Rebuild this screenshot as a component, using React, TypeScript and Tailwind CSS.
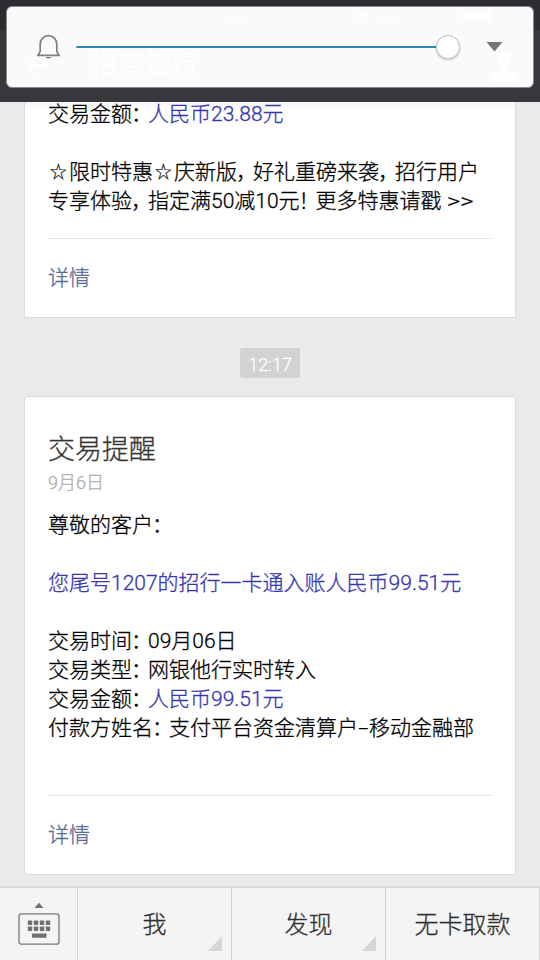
import type { ReactNode } from "react";

const MENU: { label: string; width: string; hasSubmenu: boolean }[] = [
  { label: "我", width: "w-[154px]", hasSubmenu: true },
  { label: "发现", width: "w-[154px]", hasSubmenu: true },
  { label: "无卡取款", width: "w-[154px]", hasSubmenu: false },
];

// Full-width punctuation is set tighter than the surrounding characters
function Text({ children }: { children: string }) {
  return (
    <>
      {children.split(/(>>|[：，！☆-])/).map((part, i) => {
        if (part === "-") {
          return (
            <span key={i} className="inline-block w-[11px] scale-x-[1.7] text-center">-</span>
          );
        }
        if (part === ">>") {
          return (
            <span key={i} className="inline-block origin-left scale-x-[1.22]">{part}</span>
          );
        }
        if (part === "☆") {
          return (
            <span key={i} className="inline-block scale-[0.8]">☆</span>
          );
        }
        if (/[：，！]/.test(part)) {
          return (
            <span key={i} className="relative -left-px tracking-[-5px]">{part}</span>
          );
        }
        return part;
      })}
    </>
  );
}

function Line({ children }: { children?: ReactNode }) {
  return <p className="h-[29px] whitespace-pre">{children}</p>;
}

function Amount({ children }: { children: string }) {
  return <span className="text-[#3636b0]">{children}</span>;
}

export default function App() {
  return (
    <div className="relative flex h-[960px] w-[540px] flex-col overflow-hidden bg-[#eaeaea] font-[Roboto,'Noto_Sans_CJK_SC',sans-serif] text-[21px] font-light leading-[29px] text-black [-webkit-text-stroke:0.3px]">
      <Header />
      <main className="flex flex-1 flex-col items-center overflow-hidden">
        <section className="h-[216px] w-[492px] shrink-0 border-x border-b border-[#dcdcdc] bg-white bg-linear-to-b from-[#f6f6f6] to-white to-[8px] px-[23px]">
          <div className="h-[136px]">
            <p className="h-[27px] leading-[24px]"><Text>交易金额：</Text><Amount>人民币23.88元</Amount></p>
            <Line />
            <Line><Text>☆限时特惠☆庆新版，好礼重磅来袭，招行用户</Text></Line>
            <Line><Text>{"专享体验，指定满50减10元！更多特惠请戳 >>"}</Text></Line>
          </div>
          <Details />
        </section>

        <div className="mt-[30px] flex h-[30px] w-[60px] shrink-0 items-center justify-center rounded-[3px] bg-[#d2d2d2] pt-[2px] text-[18px] text-white">
          12:17
        </div>

        <section className="mt-[18px] h-[479px] w-[492px] shrink-0 rounded-[3px] border border-[#dadada] bg-white px-[23px]">
          <div className="h-[398px] pt-[36px]">
            <h1 className="h-[36px] text-[27px] leading-[34px] text-[#353535]">交易提醒</h1>
            <p className="h-[28px] text-[18px] leading-[28px] text-[#b0b0b0]">9月6日</p>
            <div className="mt-[14px]">
              <Line><Text>尊敬的客户：</Text></Line>
              <Line />
              <Line><Amount>您尾号1207的招行一卡通入账人民币99.51元</Amount></Line>
              <Line />
              <Line><Text>交易时间：09月06日</Text></Line>
              <Line><Text>交易类型：网银他行实时转入</Text></Line>
              <Line><Text>交易金额：</Text><Amount>人民币99.51元</Amount></Line>
              <Line><Text>付款方姓名：支付平台资金清算户-移动金融部</Text></Line>
            </div>
          </div>
          <Details />
        </section>
      </main>
      <MenuBar />
      <VolumePanel />
    </div>
  );
}

function Details() {
  return (
    <div className="flex h-[79px] items-center border-t border-[#e3e3e3] text-[#576b95]">
      详情
    </div>
  );
}

function Header() {
  return (
    <header className="flex h-[102px] shrink-0 flex-col bg-[#37383c]">
      <div className="h-[30px] bg-[#2d2d32]" />
    </header>
  );
}

function VolumePanel() {
  return (
    <div className="absolute left-[6px] top-[6px] h-[82px] w-[528px] rounded-[6px] border border-[#8a8a8c] bg-[#fafafa]">
      {/* status and title bars showing faintly through the panel */}
      <svg className="absolute left-0 top-0" width="526" height="30" viewBox="0 0 526 30" fill="#fdfdfd">
        <circle cx="224" cy="12" r="1.5" />
        <circle cx="231" cy="12" r="1.5" />
        <circle cx="238" cy="12" r="1.5" />
        <path d="M346 6q8-6 16 0l-8 9z" />
        <circle cx="376" cy="13" r="1.5" />
        <circle cx="383" cy="13" r="1.5" />
        <circle cx="390" cy="13" r="1.5" />
        <rect x="455" y="3" width="30" height="11" rx="2" />
      </svg>
      <div className="absolute left-[18px] top-[44px] flex items-center text-[#fefefe]">
        <svg width="24" height="28" viewBox="0 0 24 28" fill="none" stroke="currentColor" strokeWidth="3">
          <path d="M22 14H4M12 4L3 14l9 10" />
        </svg>
        <span className="ml-[42px] text-[27px] font-normal">招商银行</span>
      </div>
      <svg className="absolute left-[481px] top-[43px] text-[#fefefe]" width="32" height="32" viewBox="0 0 32 32" fill="currentColor">
        <path d="M16 2c-4 0-6 3-6 7s1 6 3 8v3c-4 2-10 3-12 6v5h30v-5c-2-3-8-4-12-6v-3c2-2 3-4 3-8s-2-7-6-7z" />
      </svg>

      <div className="relative flex h-full items-center">
        <svg className="ml-[30px]" width="23" height="26" viewBox="0 0 23 26" fill="none" stroke="#808080" strokeWidth="1.7">
          <path d="M3.2 17.5V10.2a8.3 8.6 0 0 1 16.6 0v7.3L22 21.3H1z" />
          <path d="M8.3 23h6.4c-.8 1.9-5.6 1.9-6.4 0z" fill="#808080" stroke="none" />
        </svg>
        <div className="ml-[16px] h-[2px] w-[361px] rounded-full bg-[#2e8aaa]" />
        <div className="-ml-[1px] size-[24px] rounded-full border border-[#c4c4c8] bg-white shadow-[0_1px_2px_rgba(0,0,0,0.25)]" />
        <svg className="ml-[26px]" width="17" height="10" viewBox="0 0 17 10" fill="#767676">
          <path d="M.5 0h16L8.5 9.5z" />
        </svg>
      </div>
    </div>
  );
}

function MenuBar() {
  return (
    <nav className="flex h-[74px] shrink-0 border-t-2 border-[#dcdcdc] bg-[#f4f4f4] text-[24px] text-[#303030]">
      <div className="flex w-[77px] justify-center pt-[14px]">
        <svg width="42" height="44" viewBox="0 0 42 44" fill="#707070">
          <path d="M16.5 6h9L21 .8z" />
          <rect x="1" y="11.8" width="40" height="30.4" rx="2.5" fill="none" stroke="#77777a" strokeWidth="1.3" />
          {[9.8, 15.8, 21.8, 27.8].map((x) => (
            <g key={x}>
              <rect x={x} y="18.5" width="4.4" height="4.4" rx=".7" />
              <rect x={x} y="24.5" width="4.4" height="4.4" rx=".7" />
            </g>
          ))}
          <rect x="14" y="31.5" width="14.5" height="4.2" rx=".7" />
        </svg>
      </div>
      {MENU.map((item) => (
        <div
          key={item.label}
          className={`relative flex items-center justify-center border-l border-[#d2d2d2] pt-[3px] ${item.width}`}
        >
          {item.label}
          {item.hasSubmenu && (
            <svg className="absolute bottom-[9px] right-[9px]" width="14" height="15" viewBox="0 0 14 15" fill="#d6d6d6">
              <path d="M14 0v15H0z" />
            </svg>
          )}
        </div>
      ))}
      <div className="w-px bg-[#d2d2d2]" />
    </nav>
  );
}
